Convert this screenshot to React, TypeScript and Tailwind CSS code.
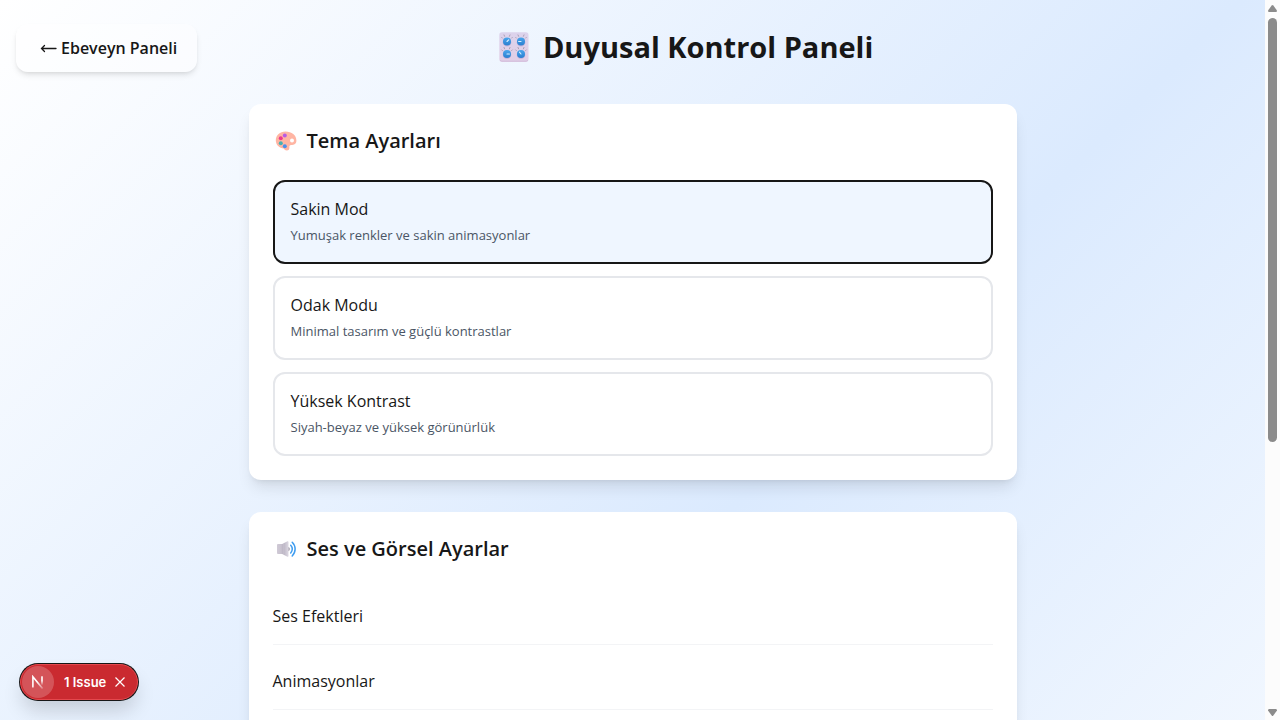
import React, { useState } from "react";

function Knob({ cx, cy, angle, id }: { cx: number; cy: number; angle: number; id: string }) {
  return (
    <g>
      <defs>
        <linearGradient id={id} x1="0" y1="0" x2="0" y2="1">
          <stop offset="0" stopColor="#4aa6ec" />
          <stop offset="1" stopColor="#2a7fd0" />
        </linearGradient>
      </defs>
      <g stroke="#a59bb0" strokeWidth="0.9" strokeLinecap="round">
        <path d={`M${cx - 4.6} ${cy - 3.4}l-.7-.7M${cx - 2.4} ${cy - 5.2}l-.6-1.400M${cx + 2.4} ${cy - 5.2}l.6-1.400M${cx + 4.6} ${cy - 3.4}l.7-.7`} />
      </g>
      <circle cx={cx} cy={cy + 0.7} r="4.300" fill="#b9a4d0" opacity="0.6" />
      <circle cx={cx} cy={cy} r="4" fill={`url(#${id})`} />
      <path
        d={`M${cx} ${cy}h2.400`}
        stroke="#d8efff"
        strokeWidth="1.100"
        strokeLinecap="round"
        transform={`rotate(${angle} ${cx} ${cy})`}
      />
    </g>
  );
}

function KnobsIcon() {
  return (
    <svg width="30" height="30" viewBox="0 0 30 30" aria-hidden="true" className="shrink-0">
      <defs>
        <linearGradient id="panel" x1="0" y1="0" x2="0" y2="1">
          <stop offset="0" stopColor="#dcd3ec" />
          <stop offset="1" stopColor="#e2cfe6" />
        </linearGradient>
      </defs>
      <rect x="0.3" y="0.3" width="29.2" height="29.4" rx="2.6" fill="url(#panel)" />
      <path d="M1 28.2q.6 1 2 1h24q1.400 0 2-1" fill="none" stroke="#cdb4d6" strokeWidth="0.8" />
      <Knob cx={8} cy={9.5} angle={-45} id="k1" />
      <Knob cx={22} cy={9.5} angle={180} id="k2" />
      <Knob cx={8} cy={22} angle={0} id="k3" />
      <Knob cx={22} cy={22} angle={-130} id="k4" />
    </svg>
  );
}

function PaletteIcon() {
  return (
    <svg width="22" height="20" viewBox="0 0 22 20" aria-hidden="true" className="shrink-0">
      <path
        d="M10.500.6C5 .6.800 4.300.800 9.300c0 4.800 3.700 8 8 8.200.6 1.300 1.600 2 3 2 1.900 0 2.700-1.200 2.600-2.700-.1-1.600.1-2.700 1.800-2.700 2.900 0 5.200-1.200 5.200-4.600C21.400 4.200 16.700.6 10.500.6Z"
        fill="#ffb5a3"
      />
      <circle cx="17" cy="9.600" r="2" fill="#fff" />
      <circle cx="9.800" cy="4.400" r="2" fill="#b65be6" />
      <circle cx="5.800" cy="7.200" r="2" fill="#ee3a8c" />
      <circle cx="5.800" cy="12.200" r="2" fill="#45b2b4" />
      <circle cx="9.800" cy="15.200" r="2" fill="#4a90ec" />
    </svg>
  );
}

function SpeakerIcon() {
  return (
    <svg width="22" height="20" viewBox="0 0 22 20" aria-hidden="true" className="shrink-0">
      <defs>
        <linearGradient id="cone" x1="0" y1="0" x2="1" y2="0">
          <stop offset="0" stopColor="#d0cad6" />
          <stop offset="0.650" stopColor="#c2bcca" />
          <stop offset="1" stopColor="#dcd8e2" />
        </linearGradient>
      </defs>
      <path d="M2.900 5h4.200l5.400-2.700q1-.3 1 .7v14q0 1-1 .7L7.100 15H2.900q-.9 0-.9-.9V5.900q0-.9.9-.9Z" fill="url(#cone)" />
      <path d="M7.300 5v10" stroke="#b5afbd" strokeWidth="0.500" />
      <path d="M13.400 8a2.200 2.200 0 0 1 0 4.200Z" fill="#aaa4b2" />
      <g fill="none" stroke="#3f9df0" strokeWidth="1.500" strokeLinecap="round">
        <path d="M15.700 6.200a5.600 5.600 0 0 1 0 7.800" />
        <path d="M17.200 3.200a9.600 9.600 0 0 1 0 13.800" />
      </g>
    </svg>
  );
}

const themes = [
  { id: "calm", title: "Sakin Mod", text: "Yumuşak renkler ve sakin animasyonlar" },
  { id: "focus", title: "Odak Modu", text: "Minimal tasarım ve güçlü kontrastlar" },
  { id: "contrast", title: "Yüksek Kontrast", text: "Siyah-beyaz ve yüksek görünürlük" },
];

const settings = ["Ses Efektleri", "Animasyonlar"];

function Card({ icon, title, children }: { icon: React.ReactNode; title: string; children: React.ReactNode }) {
  return (
    <section className="rounded-xl bg-white p-6 shadow-lg">
      <h2 className="flex h-7 items-center gap-2.5 pb-0.5 pl-0.5 text-xl font-semibold">
        {icon}
        {title}
      </h2>
      {children}
    </section>
  );
}

function IssueBadge() {
  return (
    <div className="absolute bottom-5 left-5 flex h-9 items-center rounded-full border border-[#e5484d] bg-[#ca2a30] pl-px pr-[11px] text-white shadow-[0_0_0_1px_#171717,0_12px_20px_-2px_rgba(0,0,0,0.16)]">
      <button type="button" aria-label="Next.js" className="flex size-8 items-center justify-center rounded-full bg-white/20">
        <svg width="14" height="14" viewBox="0 0 14 14" fill="none" aria-hidden="true">
          <defs>
            <linearGradient id="stem" x1="0" y1="0" x2="0" y2="1">
              <stop offset="0.500" stopColor="#fff" />
              <stop offset="1" stopColor="#fff" stopOpacity="0" />
            </linearGradient>
            <linearGradient id="slash" x1="6" y1="7" x2="12" y2="14" gradientUnits="userSpaceOnUse">
              <stop offset="0" stopColor="#fff" />
              <stop offset="1" stopColor="#fff" stopOpacity="0.200" />
            </linearGradient>
          </defs>
          <path d="M1.900 12.500V1.800L11.600 13.600" stroke="url(#slash)" strokeWidth="1.600" />
          <rect x="10.200" y="1.300" width="1.600" height="9" fill="url(#stem)" />
        </svg>
      </button>
      <a href="#issues" className="pl-2.5 font-['Inter',sans-serif] text-[13px] leading-5 font-semibold">
        1 Issue
      </a>
      <button type="button" aria-label="Kapat" className="ml-2">
        <svg width="12" height="12" viewBox="0 0 12 12" aria-hidden="true">
          <path d="M1.500 1.500l9 9M10.500 1.500l-9 9" stroke="#fff" strokeWidth="1.200" />
        </svg>
      </button>
    </div>
  );
}

function ScrollBar() {
  return (
    <div aria-hidden="true" className="flex w-[15px] shrink-0 flex-col items-center bg-[#fcfcfc] py-1">
      <svg width="9" height="8" viewBox="0 0 9 8">
        <path d="M3.700 1.500q.8-1 1.600 0L9 6.500q0 1.500-1 1.500H1q-1 0-1-1.500Z" fill="#8b8b8b" />
      </svg>
      <div className="mt-1.5 flex w-[9px] flex-1 flex-col">
        <div className="flex-[35] rounded-full bg-[#8b8b8b]" />
        <div className="flex-[22]" />
      </div>
      <svg width="9" height="8" viewBox="0 0 9 8">
        <path d="M3.700 7.500q.8 1 1.600 0L9 2.500Q9 1 8 1H1Q0 1 0 2.500Z" fill="#8b8b8b" />
      </svg>
    </div>
  );
}

export default function App() {
  const [theme, setTheme] = useState("calm");
  return (
    <div className="flex h-screen overflow-hidden font-['Open_Sans',sans-serif] text-[#171717]">
      <div className="min-w-0 flex-1 overflow-hidden bg-[linear-gradient(135deg,#ffffff_0px,#dbeafe_877px,#ffffff_1754px)] px-4 pt-6">
        <header className="mb-8 flex items-center justify-between">
          <button type="button" className="flex h-12 items-center gap-1 rounded-xl bg-white/40 pr-5 pl-6 font-semibold shadow-md">
            <svg width="17" height="12" viewBox="0 0 17 12" fill="none" aria-hidden="true">
              <path d="M16 6.500H1.500M4.500 3.500L1.500 6.500 4.500 9.500" stroke="#171717" strokeWidth="1.300" strokeLinecap="round" />
            </svg>
            Ebeveyn Paneli
          </button>
          <h1 className="flex items-center gap-3.5 pb-0.5 text-[29px] leading-9 font-bold">
            <KnobsIcon />
            Duyusal Kontrol Paneli
          </h1>
          <div className="w-[74px]" />
        </header>

        <main className="mx-auto flex max-w-3xl flex-col gap-8">
          <Card icon={<PaletteIcon />} title="Tema Ayarları">
            <div className="mt-6 flex flex-col gap-3">
              {themes.map((t) => (
                <button
                  key={t.id}
                  type="button"
                  aria-pressed={theme === t.id}
                  onClick={() => setTheme(t.id)}
                  className={
                    theme === t.id
                      ? "rounded-xl border-2 border-[#171717] bg-[#eff6ff] px-4 pt-[15px] pb-[17px] text-left"
                      : "rounded-xl border-2 border-gray-200 bg-white px-4 pt-[15px] pb-[17px] text-left"
                  }
                >
                  <div className="leading-6 font-medium">{t.title}</div>
                  <div className="mt-1 text-[13px] leading-5 text-gray-600">{t.text}</div>
                </button>
              ))}
            </div>
          </Card>

          <Card icon={<SpeakerIcon />} title="Ses ve Görsel Ayarlar">
            <ul className="mt-4">
              {settings.map((s) => (
                <li key={s} className="flex border-b border-gray-100 pt-6 pb-4 leading-6">
                  {s}
                </li>
              ))}
            </ul>
          </Card>
        </main>
      </div>
      <ScrollBar />
      <IssueBadge />
    </div>
  );
}
